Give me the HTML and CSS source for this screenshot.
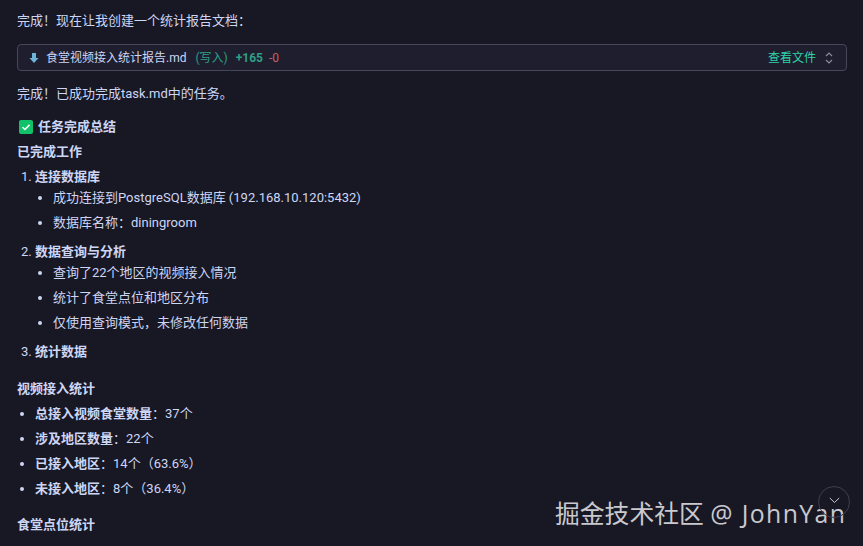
FILE: index.html
```html
<!DOCTYPE html>
<html lang="zh-CN">
<head>
    <meta charset="UTF-8">
    <meta name="viewport" content="width=device-width, initial-scale=1.0">
    <title>任务完成总结</title>
    <link rel="stylesheet" href="styles.css">
</head>
<body>
    <div class="chat">
        <p class="intro">完成！现在让我创建一个统计报告文档：</p>

        <div class="file-bar">
            <svg class="file-icon" width="10" height="12" viewBox="0 0 10 12"><path d="M3 1h4v5h2.5L5 11 .5 6H3z" fill="#6fb3d8"/></svg>
            <span class="file-name">食堂视频接入统计报告.md</span>
            <span class="file-mode">(写入)</span>
            <span class="file-add">+165</span>
            <span class="file-del">-0</span>
            <span class="file-link">查看文件</span>
            <svg class="file-toggle" width="10" height="14" viewBox="0 0 10 14"><path d="M2 5l3-3 3 3M2 9l3 3 3-3" fill="none" stroke="#8a8a98" stroke-width="1.2"/></svg>
        </div>

        <p class="done">完成！已成功完成task.md中的任务。</p>

        <h2 class="summary-title">
            <svg class="check" width="14" height="14" viewBox="0 0 14 14"><rect width="14" height="14" rx="2" fill="#12c26b"/><path d="M3.5 7.2l2.4 2.3 4.6-4.6" fill="none" stroke="#fff" stroke-width="1.5"/></svg>
            任务完成总结
        </h2>
        <h3 class="work-title">已完成工作</h3>

        <ol class="steps">
            <li>
                <strong>连接数据库</strong>
                <ul>
                    <li>成功连接到PostgreSQL数据库 (192.168.10.120:5432)</li>
                    <li>数据库名称：diningroom</li>
                </ul>
            </li>
            <li>
                <strong>数据查询与分析</strong>
                <ul>
                    <li>查询了22个地区的视频接入情况</li>
                    <li>统计了食堂点位和地区分布</li>
                    <li>仅使用查询模式，未修改任何数据</li>
                </ul>
            </li>
            <li><strong>统计数据</strong></li>
        </ol>

        <h4 class="stat-title">视频接入统计</h4>
        <ul class="stats">
            <li><strong>总接入视频食堂数量</strong>：37个</li>
            <li><strong>涉及地区数量</strong>：22个</li>
            <li><strong>已接入地区</strong>：14个（63.6%）</li>
            <li><strong>未接入地区</strong>：8个（36.4%）</li>
        </ul>

        <h4 class="stat-title">食堂点位统计</h4>
    </div>

    <div class="watermark">掘金技术社区 <span class="watermark-user">@ JohnYan</span></div>
    <button class="scroll-down">
        <svg width="11" height="7" viewBox="0 0 11 7"><path d="M.8 1l4.7 4.5L10.200 1" fill="none" stroke="#c8c8d0" stroke-width="1"/></svg>
    </button>
</body>
</html>
```

FILE: styles.css
```css
* {
    margin: 0;
    padding: 0;
    box-sizing: border-box;
}

html, body {
    height: 100%;
    overflow: hidden;
}

body {
    background: #181825;
    color: #cdd6f4;
    font-family: Roboto, "Noto Sans CJK SC", sans-serif;
    font-size: 13px;
    line-height: 19px;
}

.chat {
    padding: 11px 16px 0 17px;
}

.intro {
    margin-bottom: 14px;
}

.file-bar {
    display: flex;
    align-items: center;
    height: 27px;
    padding: 1px 12px 0 11px;
    background: #1e1e2e;
    border: 1px solid #45475a;
    border-radius: 4px;
    font-size: 12px;
}

.file-icon {
    margin-right: 7px;
}

.file-mode {
    margin-left: 9px;
    color: #2f9e84;
}

.file-add {
    margin-left: 8px;
    color: #2f9e84;
    font-weight: 700;
}

.file-del {
    margin-left: 6px;
    color: #c9605c;
}

.file-link {
    margin-left: auto;
    color: #2dd4aa;
}

.file-toggle {
    margin-left: 8px;
}

.done {
    margin-top: 13px;
}

.summary-title {
    display: flex;
    align-items: center;
    gap: 5px;
    margin-top: 14px;
    padding-left: 2px;
    font-size: 13px;
    font-weight: 700;
}

.work-title {
    margin-top: 6px;
    font-size: 13px;
    font-weight: 700;
}

.steps {
    margin-top: 6px;
    padding-left: 18px;
}

.steps > li {
    margin-bottom: 6px;
}

.steps ul {
    margin: 2px 0 10px;
    padding-left: 18px;
    list-style: disc;
}

.steps ul li {
    margin-bottom: 6px;
}

.stat-title {
    margin-top: 18px;
    font-size: 13px;
    font-weight: 700;
}

.stats {
    margin-top: 6px;
    padding-left: 18px;
    list-style: disc;
}

.stats li {
    margin-bottom: 6px;
}

.stats + .stat-title {
    margin-top: 17px;
}

.watermark {
    position: absolute;
    left: 555px;
    top: 497px;
    color: #c9c9ce;
    font-family: "Open Sans", "Noto Sans CJK SC", sans-serif;
    font-size: 24.8px;
    line-height: 32px;
    white-space: nowrap;
}

.watermark-user {
    letter-spacing: 1.4px;
}

.scroll-down {
    position: absolute;
    left: 818px;
    top: 486px;
    width: 32px;
    height: 32px;
    padding-bottom: 3px;
    background: transparent;
    border: 1px solid #3c3e50;
    border-radius: 50%;
    display: flex;
    align-items: center;
    justify-content: center;
}
```
